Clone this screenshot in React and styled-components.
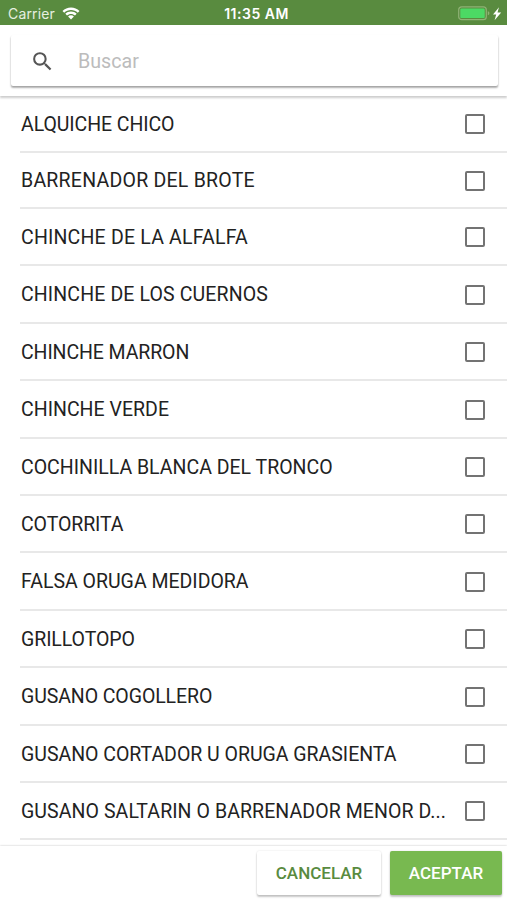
import React, { useState } from 'react'
import styled, { createGlobalStyle } from 'styled-components'
import { MdSearch } from 'react-icons/md'

const plagas = [
    { name: 'ALQUICHE CHICO', spacing: -0.08 },
    { name: 'BARRENADOR DEL BROTE', spacing: 0.24 },
    { name: 'CHINCHE DE LA ALFALFA', spacing: 0.2 },
    { name: 'CHINCHE DE LOS CUERNOS', spacing: 0.13 },
    { name: 'CHINCHE MARRON', spacing: -0.1 },
    { name: 'CHINCHE VERDE', spacing: 0.02 },
    { name: 'COCHINILLA BLANCA DEL TRONCO', spacing: 0 },
    { name: 'COTORRITA', spacing: -0.1 },
    { name: 'FALSA ORUGA MEDIDORA', spacing: 0 },
    { name: 'GRILLOTOPO', spacing: -0.08 },
    { name: 'GUSANO COGOLLERO', spacing: -0.09 },
    { name: 'GUSANO CORTADOR U ORUGA GRASIENTA', spacing: -0.02 },
    { name: 'GUSANO SALTARIN O BARRENADOR MENOR D...', spacing: 0.08 },
];

function WifiIcon() {
    return (
        <svg width="18" height="13" viewBox="0 0 18 13" fill="#fff">
            <path d="M9 0.6C5.7 0.6 2.7 1.9 0.5 4L2.2 5.8C4 4.1 6.4 3.1 9 3.1s5 1 6.8 2.7L17.5 4C15.3 1.9 12.3 0.6 9 0.6z" />
            <path d="M9 4.5c-2.2 0-4.2 0.9-5.7 2.3l1.7 1.8c1.1-1 2.5-1.6 4-1.6s2.9 0.6 4 1.6l1.7-1.8C13.2 5.4 11.2 4.5 9 4.5z" />
            <path d="M9 8.3c-1.1 0-2.1 0.4-2.9 1.2L9 12.5l2.900-3C11.1 8.7 10.1 8.3 9 8.3z" />
        </svg>
    )
}

function BatteryIcon() {
    return (
        <svg width="44" height="15" viewBox="0 0 44 15">
            <rect x="0.7" y="0.9" width="27.6" height="12.8" rx="3" fill="none" stroke="#8fb275" strokeWidth="1.2" />
            <rect x="2.3" y="2.5" width="24.4" height="9.6" rx="1.2" fill="#4cd964" />
            <path d="M29.8 5.3v4c1-.3 1.6-1 1.6-2s-.6-1.7-1.6-2z" fill="#8fb275" />
            <path d="M41 1.3l-6 7.200h3.200l-1.600 5.700 6.600-7.800h-3.700z" fill="#fff" />
        </svg>
    )
}

function App() {
    const [search, setSearch] = useState('');
    const [checked, setChecked] = useState({});

    const toggle = (name) => {
        setChecked({ ...checked, [name]: !checked[name] });
    }

    return (
        <Screen>
            <GlobalStyle />
            <StatusBar>
                <Carrier>Carrier <WifiIcon /></Carrier>
                <Clock>11:35 AM</Clock>
                <Battery><BatteryIcon /></Battery>
            </StatusBar>
            <SearchHeader>
                <SearchBox>
                    <MdSearch size={25} color="#555" />
                    <SearchInput placeholder="Buscar" value={search} onChange={(e) => setSearch(e.target.value)} />
                </SearchBox>
            </SearchHeader>
            <List>
                {plagas.filter((p) => p.name.includes(search.toUpperCase())).map((p) => (
                    <Item key={p.name} onClick={() => toggle(p.name)}>
                        <ItemName $spacing={p.spacing}>{p.name}</ItemName>
                        <Checkbox $checked={checked[p.name]} />
                    </Item>
                ))}
            </List>
            <Footer>
                <Button $width="124px">CANCELAR</Button>
                <Button $width="112px" $primary>ACEPTAR</Button>
            </Footer>
        </Screen>
    )
}

export default App

const GlobalStyle = createGlobalStyle`
    * {
        box-sizing: border-box;
    }
    body {
        margin: 0;
        background: #fff;
        font-family: Roboto, sans-serif;
    }
`

const Screen = styled.div`
    width: 507px;
    height: 900px;
    display: flex;
    flex-direction: column;
    overflow: hidden;
    background: #fff;
`

const StatusBar = styled.div`
    flex: none;
    height: 25px;
    padding: 2px 5px 0 8px;
    display: grid;
    grid-template-columns: 1fr auto 1fr;
    align-items: center;
    background: #598b3f;
    color: #fff;
    font-family: Inter, sans-serif;
    font-size: 14px;
`

const Carrier = styled.div`
    display: flex;
    align-items: center;
    gap: 7px;
    letter-spacing: 0.15px;
    color: #e6efe0;
`

const Clock = styled.div`
    padding-left: 3px;
    font-weight: 600;
    letter-spacing: 0.5px;
`

const Battery = styled.div`
    display: flex;
    justify-content: flex-end;
`

const SearchHeader = styled.div`
    flex: none;
    height: 71px;
    padding: 10px 9px 0 11px;
    background: #fff;
    box-shadow: 0 2px 2px rgba(0, 0, 0, 0.2);
    z-index: 1;
`

const SearchBox = styled.div`
    height: 51px;
    padding: 1px 19px 0;
    display: flex;
    align-items: center;
    gap: 23px;
    border-radius: 2px;
    background: #fff;
    box-shadow: 0 2px 2px rgba(0, 0, 0, 0.28), 0 1px 2px rgba(0, 0, 0, 0.14);
`

const SearchInput = styled.input`
    flex: 1;
    padding: 0;
    border: none;
    outline: none;
    background: none;
    font-family: Roboto, sans-serif;
    font-size: 19.7px;
    color: #222;

    &::placeholder {
        color: #bcbcbc;
    }
`

const List = styled.div`
    flex: 1;
    min-height: 0;
    overflow: hidden;
`

const Item = styled.div`
    height: 57.4px;
    margin-left: 20px;
    padding: 1.6px 22px 0 0;
    display: flex;
    align-items: center;
    justify-content: space-between;
    border-bottom: 2px solid #e8e8e8;

    &:nth-child(-n + 2) {
        height: 56.5px;
    }
`

const ItemName = styled.span`
    padding-left: 1px;
    white-space: nowrap;
    font-size: 19.5px;
    letter-spacing: ${(props) => props.$spacing}px;
    color: #222;
`

const Checkbox = styled.div`
    flex: none;
    width: 20px;
    height: 20px;
    border: 2px solid #737373;
    border-radius: 2px;
    background: ${(props) => (props.$checked ? '#78b950' : '#fff')};
`

const Footer = styled.div`
    flex: none;
    height: 54px;
    padding: 5px 5px 0 0;
    display: flex;
    justify-content: flex-end;
    gap: 9px;
    background: #fff;
    box-shadow: 0 0 2px rgba(0, 0, 0, 0.25);
    z-index: 1;
`

const Button = styled.button`
    width: ${(props) => props.$width};
    height: 44px;
    padding: 0;
    border: none;
    border-radius: 2px;
    background: ${(props) => (props.$primary ? '#78b950' : '#fff')};
    color: ${(props) => (props.$primary ? '#fff' : '#598b3f')};
    font-family: Roboto, sans-serif;
    font-size: 17px;
    font-weight: 500;
    box-shadow: 0 2px 2px rgba(0, 0, 0, 0.22), 0 0 2px rgba(0, 0, 0, 0.12);
`
